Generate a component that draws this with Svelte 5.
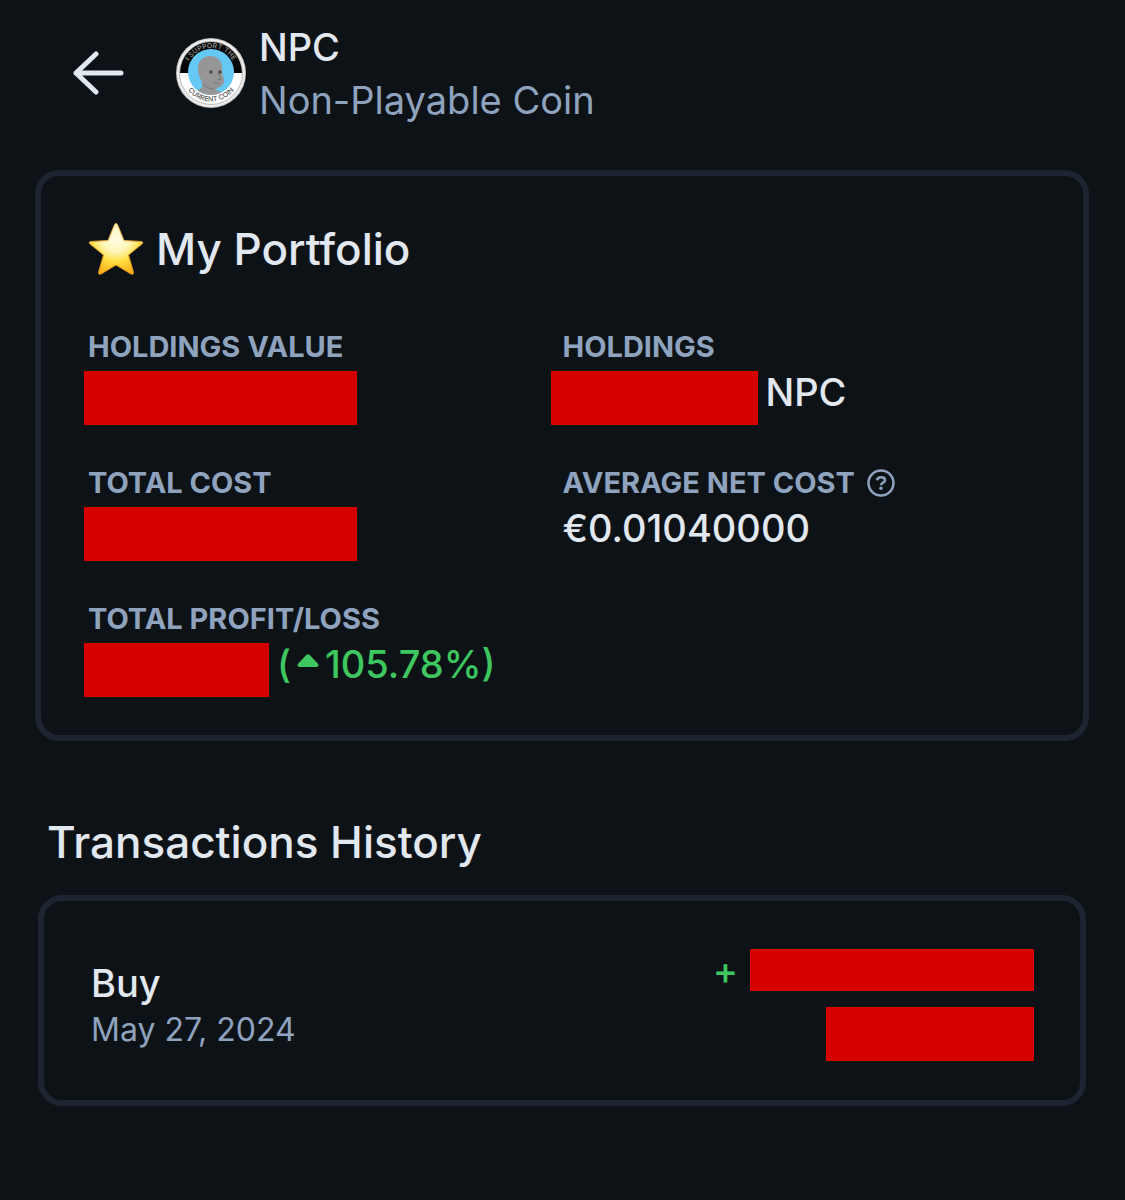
<script>
	const coin = { symbol: 'NPC', name: 'Non-Playable Coin' };

	// hidden amounts are drawn as solid bars, `hidden` is the bar width
	const stats = [
		{ label: 'Holdings value', hidden: 273 },
		{ label: 'Holdings', hidden: 207, text: coin.symbol, outdent: true },
		{ label: 'Total cost', hidden: 273 },
		{ label: 'Average net cost', text: '€0.01040000', help: true },
		{ label: 'Total profit/loss', hidden: 185, change: '105.78%' }
	];

	const transactions = [{ type: 'Buy', date: 'May 27, 2024', sign: '+', amount: 284, value: 208 }];
</script>

<main>
	<header>
		<button class="back" aria-label="Back">
			<svg width="52" height="46" viewBox="0 0 52 46">
				<path d="M24 3 4 22l20 19M4 22h45" />
			</svg>
		</button>
		<svg class="logo" width="72" height="72" viewBox="0 0 72 72" aria-hidden="true">
			<defs>
				<clipPath id="face"><circle cx="36" cy="34" r="23" /></clipPath>
				<path id="arc-top" d="M11 35a25 25 0 0 1 50 0" />
				<path id="arc-bottom" d="M6.5 34a29.5 29.5 0 0 0 59 0" />
			</defs>
			<circle cx="36" cy="35" r="35" fill="#c4c4c4" />
			<circle cx="36" cy="35" r="34" fill="#eee" />
			<circle cx="36" cy="35" r="31.5" fill="#fff" stroke="#bbb" />
			<path d="M5 35a31 31 0 0 1 62 0z" fill="#050505" />
			<circle cx="36" cy="34" r="23" fill="#65c8f5" />
			<g clip-path="url(#face)">
				<path
					d="M20 58c1-5 4-7 7-8 1-4 0-7-2-10-2-4-2-7-2-10 0-8 6-12 13-12 6 0 10 4 11 10 .5 4 0 6 .5 8l1.500 6c0 5-3 7-7 8l-1 2c4 1 7 3 8 6z"
					fill="#969696"
				/>
				<path d="M28 46c3 3 6 5 11 5M43 35l3 6-4 1M38 45h6" fill="none" stroke="#757575" />
				<circle cx="36" cy="34" r="1.700" fill="#444" />
				<circle cx="45" cy="34" r="1.700" fill="#444" />
			</g>
			<text class="top"><textPath href="#arc-top" startOffset="50%">I SUPPORT THE</textPath></text>
			<text class="bottom"><textPath href="#arc-bottom" startOffset="50%">CURRENT COIN</textPath></text>
		</svg>
		<div class="coin">
			<h1>{coin.symbol}</h1>
			<p>{coin.name}</p>
		</div>
	</header>

	<section class="card portfolio">
		<h2>
			<svg width="56" height="54" viewBox="0 0 56 54" aria-hidden="true">
				<defs>
					<radialGradient id="star" cx="0.5" cy="0.3" r="0.75">
						<stop offset="0" stop-color="#fffce6" />
						<stop offset="0.35" stop-color="#fff6b8" />
						<stop offset="0.6" stop-color="#ffdf45" />
						<stop offset="1" stop-color="#fba80c" />
					</radialGradient>
					<linearGradient id="edge" x1="0" y1="0" x2="0" y2="1">
						<stop offset="0" stop-color="#e0a34a" />
						<stop offset="1" stop-color="#e9970f" />
					</linearGradient>
				</defs>
				<path
					d="M26.5 2.5q1.500-2.500 3 0l6.500 16 17.500 1q2.500.5.5 2.500l-13.500 11 5 17.500q0 2.500-2.500 1.500l-15-9-15 9q-2.500 1-2.500-1.500l5-17.500-13.500-11q-2-2 .5-2.500l17.500-1z"
					fill="url(#star)"
					stroke="url(#edge)"
					stroke-linejoin="round"
				/>
			</svg>
			My Portfolio
		</h2>
		<dl>
			{#each stats as stat}
				<div>
					<dt>
						{stat.label}
						{#if stat.help}
							<button class="help" aria-label="About average net cost">
								<svg width="28" height="28" viewBox="0 0 28 28">
									<circle cx="14" cy="14" r="12.500" />
									<path d="M10 11.200c.6-4 8-4 8 0 0 2.600-4 2.300-4 5" />
									<circle class="dot" cx="14" cy="19.200" r="1.700" />
								</svg>
							</button>
						{/if}
					</dt>
					<dd>
						{#if stat.hidden}
							<span class="bar" class:outdent={stat.outdent} style:width="{stat.hidden}px"></span>
						{/if}
						{stat.text ?? ''}
						{#if stat.change}
							<span class="change">
								(<svg width="22" height="14" viewBox="0 0 22 14" aria-hidden="true">
									<path d="M9.500.8q1.500-1.200 3 0l8.500 9q1.500 3-1.500 3.200h-17q-3-.2-1.500-3.200z" />
								</svg>{stat.change})
							</span>
						{/if}
					</dd>
				</div>
			{/each}
		</dl>
	</section>

	<h2 class="history-title">Transactions History</h2>
	{#each transactions as tx}
		<section class="card transaction">
			<div>
				<h3>{tx.type}</h3>
				<time datetime="2024-05-27">{tx.date}</time>
			</div>
			<div class="amounts">
				<div class="amount">
					<span>{tx.sign}</span>
					<span class="bar short" style:width="{tx.amount}px"></span>
				</div>
				<span class="bar" style:width="{tx.value}px"></span>
			</div>
		</section>
	{/each}
</main>

<style>
	:global(body) {
		margin: 0;
		background: #0d1217;
	}

	main {
		padding: 21px 36px 94px 35px;
		font-family: Inter, 'Liberation Sans', sans-serif;
		font-size: 38px;
		color: #e2e8f0;
	}

	h1,
	h2,
	h3,
	p,
	dl,
	dd {
		margin: 0;
		font-size: inherit;
		font-weight: 400;
	}

	svg {
		display: block;
		flex: none;
	}

	button {
		padding: 0;
		border: 0;
		background: none;
		color: inherit;
		cursor: pointer;
	}

	header {
		display: flex;
		align-items: center;
		padding-left: 37px;
	}

	.back path {
		fill: none;
		stroke: currentColor;
		stroke-width: 5;
		stroke-linecap: round;
		stroke-linejoin: round;
	}

	.logo {
		margin: 0 12px 0 51px;
	}

	.logo text {
		font-size: 7px;
		font-weight: 500;
		text-anchor: middle;
	}

	.top {
		fill: #999;
	}

	.bottom {
		fill: #555;
	}

	.coin {
		line-height: 53px;
	}

	.coin h1 {
		font-weight: 500;
	}

	.coin p,
	dt,
	time {
		color: #8fa3bf;
	}

	.card {
		border: 6px solid #1e2531;
		border-radius: 24px;
	}

	.portfolio {
		margin-top: 43px;
		padding: 46px 46px 46px 47px;
	}

	h2 {
		display: flex;
		align-items: center;
		gap: 12px;
		font-size: 44px;
		font-weight: 500;
		line-height: 54px;
	}

	dl {
		display: grid;
		grid-template-columns: 1fr 1fr;
		gap: 46px 0;
		margin-top: 51px;
	}

	dt {
		display: flex;
		align-items: center;
		gap: 12px;
		font-size: 29px;
		font-weight: 700;
		line-height: 40px;
		text-transform: uppercase;
	}

	dd {
		display: flex;
		gap: 8px;
		height: 50px;
		font-weight: 500;
		line-height: 50px;
	}

	.help svg {
		fill: none;
		stroke: #8fa3bf;
		stroke-width: 2.5;
	}

	.help .dot {
		fill: #8fa3bf;
		stroke: none;
	}

	.bar {
		height: 54px;
		background: #d60000;
	}

	dd .bar {
		margin: 4px 0 0 -4px;
	}

	dd .outdent {
		margin-left: -12px;
	}

	.short {
		height: 42px;
	}

	.change,
	.amount {
		display: flex;
		align-items: center;
		color: #3ec75f;
	}

	.change svg {
		margin: 0 6px 6px;
		fill: currentColor;
	}

	.history-title {
		margin: 74px 12px 26px;
	}

	.transaction {
		display: flex;
		align-items: center;
		justify-content: space-between;
		margin: 0 3px;
		padding: 48px 46px 39px 47px;
	}

	.transaction h3 {
		font-weight: 500;
		line-height: 50px;
	}

	time {
		display: block;
		font-size: 32px;
		line-height: 44px;
	}

	.amounts {
		display: flex;
		flex-direction: column;
		align-items: flex-end;
		gap: 16px;
	}

	.amount {
		gap: 12px;
		height: 42px;
		font-weight: 500;
	}
</style>
